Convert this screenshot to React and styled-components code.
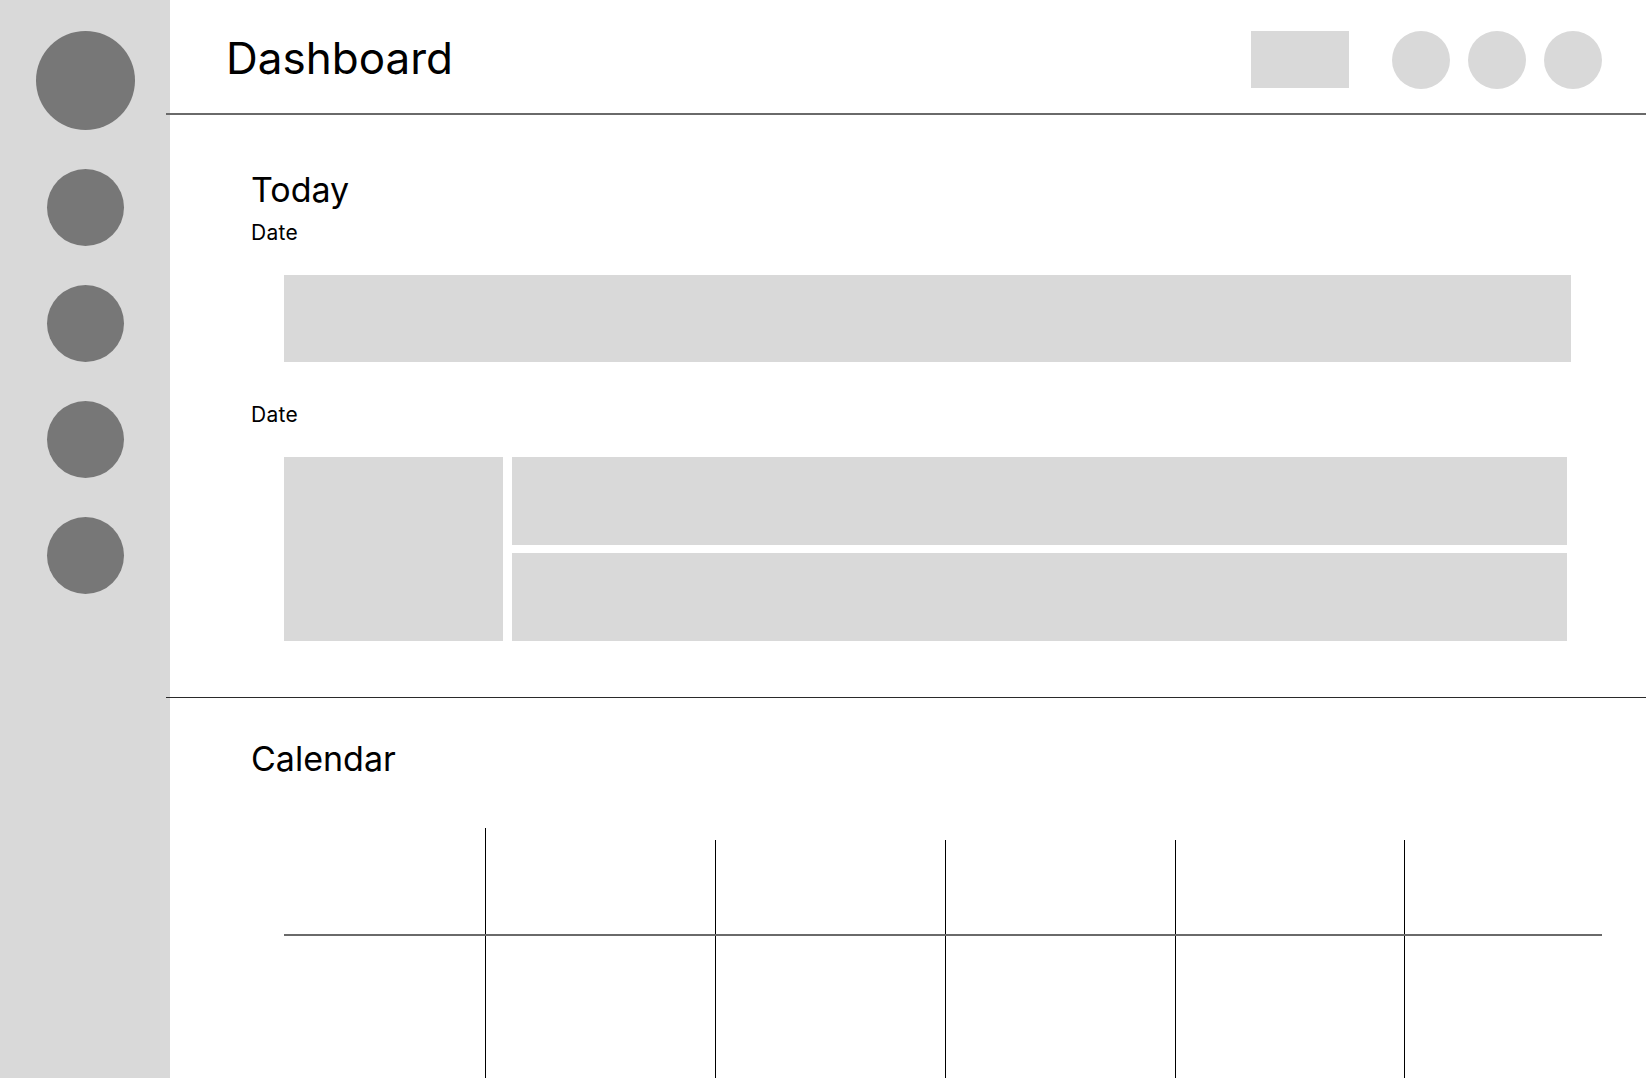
import React from 'react';
import styled, { createGlobalStyle } from 'styled-components';

const GlobalStyle = createGlobalStyle`
  html, body {
    margin: 0;
    padding: 0;
    background: #ffffff;
    overflow: hidden;
  }
  body {
    font-family: Inter, "Noto Sans", "Liberation Sans", sans-serif;
    color: #000;
  }
  * { box-sizing: border-box; }
`;

const Shell = styled.div`
  display: flex;
  width: 100vw;
  height: 100vh;
  overflow: hidden;
`;

const Sidebar = styled.nav`
  flex: 0 0 170px;
  background: #d9d9d9;
  display: flex;
  flex-direction: column;
  align-items: center;
  gap: 39px;
  padding-top: 31px;
`;

const NavDot = styled.div`
  flex-shrink: 0;
  width: ${(p) => (p.$big ? 99 : 77)}px;
  height: ${(p) => (p.$big ? 99 : 77)}px;
  border-radius: 50%;
  background: #777777;
`;

/* overlaps the sidebar by a few px so the rules start just left of its edge */
const Main = styled.main`
  position: relative;
  flex: 1;
  margin-left: -4px;
  display: flex;
  flex-direction: column;
`;

const Header = styled.header`
  flex-shrink: 0;
  height: 115px;
  display: flex;
  align-items: flex-start;
  justify-content: space-between;
  padding: 31px 44px 0 60px;
  border-bottom: 2px solid #6a6a6a;
`;

const PageTitle = styled.h1`
  margin: 0;
  font-size: 44px;
  font-weight: 400;
  line-height: 54px;
`;

const Actions = styled.div`
  display: flex;
  align-items: flex-start;
`;

const SearchBox = styled.div`
  width: 98px;
  height: 57px;
  background: #d9d9d9;
  margin-right: 43px;
`;

const IconDot = styled.div`
  width: 58px;
  height: 58px;
  border-radius: 50%;
  background: #d9d9d9;
  & + & { margin-left: 18px; }
`;

const Section = styled.section`
  flex-shrink: 0;
  padding: ${(p) => p.$pad};
  border-bottom: ${(p) => (p.$rule ? '1px solid #2a2a2a' : 'none')};
`;

const SectionTitle = styled.h2`
  margin: 0;
  padding-left: 1px;
  font-size: 34px;
  font-weight: 400;
  line-height: 40px;
`;

const Label = styled.div`
  margin-top: ${(p) => p.$mt}px;
  padding-left: 1px;
  font-size: 21px;
  letter-spacing: 0.3px;
  line-height: 24px;
`;

const Block = styled.div`
  margin: 30px 0 0 34px;
  height: 87px;
  background: #d9d9d9;
`;

const TaskGrid = styled.div`
  margin: 30px 4px 0 34px;
  display: grid;
  grid-template-columns: 219px 1fr;
  grid-template-rows: 88px 88px;
  gap: 8px 9px;
`;

const Tile = styled.div`
  background: #d9d9d9;
  grid-row: ${(p) => p.$span || 'auto'};
`;

const Calendar = styled.div`
  margin: 49px 44px 0 34px;
`;

const WeekRow = styled.div`
  display: flex;
  align-items: flex-end;
  border-bottom: 2px solid #6a6a6a;
`;

const BodyRow = styled.div`
  display: flex;
  height: 200px;
`;

const DayCell = styled.div`
  flex: 0 0 ${(p) => p.$w}px;
  height: ${(p) => (p.$h ? `${p.$h}px` : 'auto')};
  border-left: ${(p) => (p.$line ? '1px solid #000' : 'none')};
`;

const columns = [201, 230, 230, 230, 229, 198];

export default function App() {
  return (
    <>
      <GlobalStyle />
      <Shell>
        <Sidebar>
          <NavDot $big />
          <NavDot />
          <NavDot />
          <NavDot />
          <NavDot />
        </Sidebar>
        <Main>
          <Header>
            <PageTitle>Dashboard</PageTitle>
            <Actions>
              <SearchBox />
              <IconDot />
              <IconDot />
              <IconDot />
            </Actions>
          </Header>

          <Section $pad="55px 75px 56px 84px" $rule>
            <SectionTitle>Today</SectionTitle>
            <Label $mt={11}>Date</Label>
            <Block />
            <Label $mt={41}>Date</Label>
            <TaskGrid>
              <Tile $span="1 / 3" />
              <Tile />
              <Tile />
            </TaskGrid>
          </Section>

          <Section $pad="41px 0 0 84px">
            <SectionTitle>Calendar</SectionTitle>
            <Calendar>
              <WeekRow>
                {columns.map((w, i) => (
                  <DayCell key={i} $w={w} $line={i > 0} $h={i === 1 ? 106 : 94} />
                ))}
              </WeekRow>
              <BodyRow>
                {columns.map((w, i) => (
                  <DayCell key={i} $w={w} $line={i > 0} />
                ))}
              </BodyRow>
            </Calendar>
          </Section>
        </Main>
      </Shell>
    </>
  );
}
